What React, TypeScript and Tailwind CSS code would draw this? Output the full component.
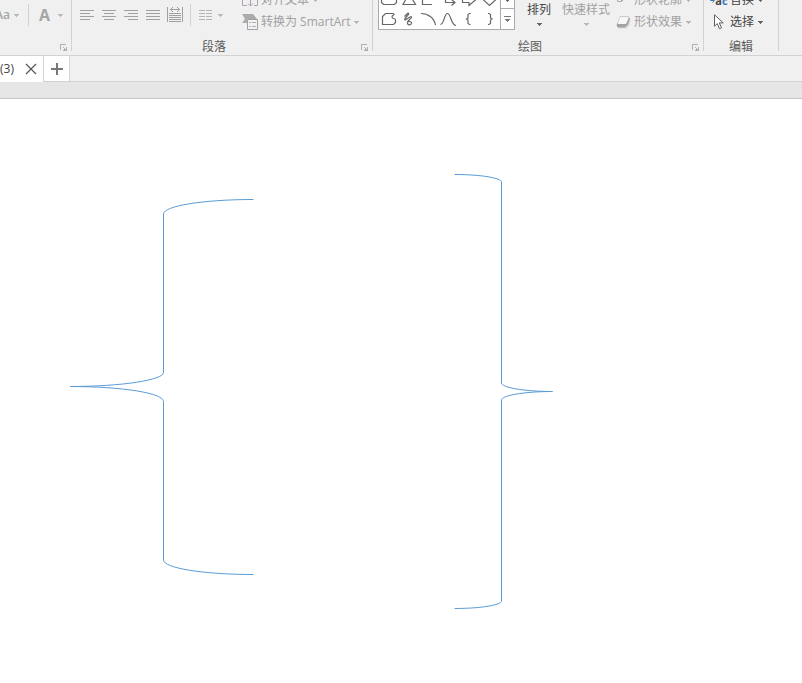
import type { ReactNode } from "react";

function Caret({ dark = false }: { dark?: boolean }) {
  return (
    <svg
      width="5"
      height="3"
      viewBox="0 0 5 3"
      shapeRendering="crispEdges"
      className={dark ? "shrink-0 text-[#666666]" : "shrink-0 text-[#b8b8b8]"}
    >
      <path d="M0 0h5v1H0zM1 1h3v1H1zM2 2h1v1H2z" fill="currentColor" />
    </svg>
  );
}

function Divider() {
  return <div className="h-[51px] w-px shrink-0 bg-[#d2d2d2]" />;
}

function SmallDivider() {
  return <div className="h-[22px] w-px shrink-0 bg-[#d2d2d2]" />;
}

function Launcher({ label }: { label: string }) {
  return (
    <button aria-label={label} className="flex h-4 w-4 items-center justify-end pr-1 text-[#b0b0b0]">
      <svg width="7" height="7" viewBox="0 0 7 7" shapeRendering="crispEdges">
        <path
          d="M0 0h6v1H1v5H0zM3 3h1v1H3zM4 4h1v1H4zM6 3h1v4H3V6h1V5h2z"
          fill="currentColor"
        />
      </svg>
    </button>
  );
}

type GroupProps = {
  label: string;
  className: string;
  launcher?: boolean;
  children: ReactNode;
};

function Group({ label, className, launcher = false, children }: GroupProps) {
  return (
    <>
      <section className={`flex h-[55px] shrink-0 flex-col ${className}`}>
        <div className="flex h-[33px] items-start">{children}</div>
        <div className="flex h-[22px] items-center pt-[6px]">
          <h2 className="flex-1 text-center text-[#5c5c5c]">{label}</h2>
          {launcher && <Launcher label={`${label || "字体"}设置`} />}
        </div>
      </section>
      <Divider />
    </>
  );
}

const alignments = [
  { label: "左对齐", d: "M0 0h14v1H0zM0 3h10v1H0zM0 6h14v1H0zM0 9h10v1H0z" },
  { label: "居中", d: "M0 0h14v1H0zM2 3h10v1H2zM0 6h14v1H0zM2 9h10v1H2z" },
  { label: "右对齐", d: "M0 0h14v1H0zM4 3h10v1H4zM0 6h14v1H0zM4 9h10v1H4z" },
  { label: "两端对齐", d: "M0 0h14v1H0zM0 3h14v1H0zM0 6h14v1H0zM0 9h14v1H0z" },
];

// Each shape is drawn in a 20x20 cell
const shapes = [
  { label: "圆角矩形", d: "M4.5 5.5h11l2 2v6l-2 2h-11l-2-2v-6z" },
  { label: "三角形", d: "M10 4.500l6.5 11H4z" },
  { label: "肘形连接符", d: "M3 5.500h10M3.500 5.500v10H13" },
  { label: "肘形箭头", d: "M3 5.500h3.5v8H16M12.500 10.500l3.5 3-3.500 3" },
  { label: "右箭头", d: "M2.5 7.5h6.500v-3l7 6-7 6v-3h-6.500z" },
  { label: "菱形", d: "M9.5 4.5l6.5 6-6.5 6-6.5-6z" },
  {
    label: "任意多边形",
    d: "M3.5 15.5v-8l3-3h7.500c1 0 1.500 1 .5 1.500-2 1-2 3 0 3.500 1.500 0 2 1 2 2v2l-2 2z",
  },
  {
    label: "自由曲线",
    d: "M5.5 7.5l3-3c1-1 1.500 0 1 1l-3.500 4c-.8 1 0 2 1 1l4-2.500c1.500-1 2 0 1 1.200l-3 3c-1.500 2 0 4 2 3.500s2-2.500.5-3-2.500 0-3 .5",
  },
  { label: "弧形", d: "M2 4.500C9 4.500 15 8.500 16.500 16" },
  { label: "曲线", d: "M1.500 15.500C5.500 15 5 4.500 8.500 4.500s3.500 12 8.500 12" },
  { label: "左大括号", d: "M10.500 4.500H9.500l-1.500 1V9L6.500 10l1.500 1v3.500l1.500 1h1" },
  { label: "右大括号", d: "M8 4.500h1l1.500 1V9l1.500 1-1.500 1v3.500l-1.500 1H8" },
];

function TextRow({
  icon,
  label,
  dark = false,
}: {
  icon: ReactNode;
  label: string;
  dark?: boolean;
}) {
  return (
    <button
      className={`flex h-[22px] shrink-0 items-center whitespace-nowrap ${dark ? "text-[#444444]" : "text-[#a0a0a0]"}`}
    >
      <span className="flex w-[18px] shrink-0 justify-center">{icon}</span>
      <span className="pr-1 pl-[2px]">{label}</span>
      <Caret dark={dark} />
    </button>
  );
}

function FontGroup() {
  return (
    <Group label="" className="w-[71px]" launcher>
      <div className="mt-1 flex h-[22px] w-full items-center justify-end pr-2 text-[#a6a6a6]">
        <button className="flex items-center gap-1">
          <span className="font-semibold">Aa</span>
          <Caret />
        </button>
        <span className="pr-[10px] pl-[9px]">
          <SmallDivider />
        </span>
        <button className="flex items-center gap-2">
          <span className="text-base font-bold">A</span>
          <Caret />
        </button>
      </div>
    </Group>
  );
}

function ParagraphGroup() {
  return (
    <Group label="段落" className="w-[300px]" launcher>
      <div className="mt-1 flex h-[22px] items-center pl-2 text-[#a0a0a0]">
        <div className="flex items-center gap-2">
          {alignments.map((item) => (
            <button key={item.label} aria-label={item.label}>
              <svg
                width="14"
                height="10"
                viewBox="0 0 14 10"
                shapeRendering="crispEdges"
                className="block"
              >
                <path d={item.d} fill="currentColor" />
              </svg>
            </button>
          ))}
        </div>
        <button aria-label="分散对齐" className="mr-[7px] ml-[7px]">
          <svg
            width="16"
            height="16"
            viewBox="0 0 16 16"
            shapeRendering="crispEdges"
            className="block"
          >
            <path
              d="M0 0h1v15H0zM15 0h1v15h-1zM2 6h12v1H2zM2 8h12v1H2zM2 10h12v1H2zM2 12h12v1H2zM2 14h12v1H2zM3 2h10v1H3zM4 1h1v3H4zM5 0h1v1H5zM5 4h1v1H5zM11 1h1v3h-1zM10 0h1v1h-1zM10 4h1v1h-1z"
              fill="currentColor"
            />
          </svg>
        </button>
        <SmallDivider />
        <button aria-label="分栏" className="ml-2 flex items-center gap-[6px]">
          <svg width="13" height="10" viewBox="0 0 13 10" shapeRendering="crispEdges">
            <path
              d="M0 0h6v1H0zM7 0h6v1H7zM0 3h6v1H0zM7 3h6v1H7zM0 6h6v1H0zM7 6h6v1H7zM0 9h6v1H0zM7 9h6v1H7z"
              fill="#b4b4b4"
            />
          </svg>
          <Caret />
        </button>
      </div>
      <div className="ml-[18px] flex h-[33px] flex-col justify-end">
        <TextRow
          label="对齐文本"
          icon={
            <svg width="16" height="16" viewBox="0 0 16 16" fill="none" stroke="#a8a8a8">
              <path d="M5 13.500H.5V.5h15v13H12" />
              <path d="M8.500 6v8M6 11.500l2.500 2.500 2.500-2.500M3 4.500h10" stroke="#b09db4" />
            </svg>
          }
        />
        <TextRow
          label="转换为 SmartArt"
          icon={
            <svg width="16" height="16" viewBox="0 0 16 16" fill="none">
              <path d="M0 0h11l4 5H5v4H0l3-4z" fill="#ababab" />
              <path d="M5.500 5.500h10v10h-10z" fill="#f4f1f5" stroke="#a0a0a0" />
              <path d="M7 8h2v1H7zM10 8h4v1h-4zM7 12h2v1H7zM10 12h4v1h-4z" fill="#b9a9be" />
            </svg>
          }
        />
      </div>
    </Group>
  );
}

function ShapeGallery() {
  return (
    <div className="ml-[5px] flex h-[30px] w-[137px] items-end overflow-hidden border-x border-b border-[#ababab] bg-white">
      <div className="grid w-[121px] shrink-0 grid-cols-6">
        {shapes.map((shape) => (
          <button key={shape.label} aria-label={shape.label}>
            <svg
              width="20"
              height="20"
              viewBox="0 0 20 20"
              fill="none"
              stroke="#666666"
              strokeWidth="1.2"
              className="block"
            >
              <path d={shape.d} />
            </svg>
          </button>
        ))}
      </div>
      <div className="flex h-full flex-1 flex-col border-l border-[#ababab]">
        <button aria-label="下一行" className="flex h-[9px] justify-center border-b border-[#ababab]">
          <svg width="3" height="2" viewBox="0 0 3 2" shapeRendering="crispEdges">
            <path d="M0 0h3v1H0zM1 1h1v1H1z" fill="#666666" />
          </svg>
        </button>
        <button aria-label="其他" className="flex flex-1 items-center justify-center">
          <svg width="7" height="7" viewBox="0 0 7 7" shapeRendering="crispEdges">
            <path d="M0 0h7v1H0zM1 3h5v1H1zM2 4h3v1H2zM3 5h1v1H3z" fill="#777777" />
          </svg>
        </button>
      </div>
    </div>
  );
}

function DrawingGroup() {
  return (
    <Group label="绘图" className="w-[330px]" launcher>
      <ShapeGallery />
      <button className="ml-3 flex flex-col items-center gap-[3px] whitespace-nowrap text-[#444444]">
        <span className="h-5 leading-5">排列</span>
        <Caret dark />
      </button>
      <button className="ml-[11px] flex flex-col items-center gap-[3px] whitespace-nowrap text-[#a0a0a0]">
        <span className="h-5 leading-5">快速样式</span>
        <Caret />
      </button>
      <div className="ml-1 flex h-[33px] flex-col justify-end">
        <TextRow
          label="形状轮廓"
          icon={
            <svg width="14" height="12" viewBox="0 0 14 12" fill="none" stroke="#a8a8a8">
              <path d="M8.500 1.500h-7v6h4l3-3" />
              <path d="M5 6l6-6 1 1-6 6z" fill="#c8c8c8" />
            </svg>
          }
        />
        <TextRow
          label="形状效果"
          icon={
            <svg width="15" height="13" viewBox="0 0 15 13">
              <path d="M5 3h9.500l-1 6-3 3.500H2z" fill="#d6d6d6" />
              <path d="M4 .5h8.500L14 2.500l-2 6-3 3H2L.5 9.500z" fill="#a3a3a3" />
              <path d="M5 1h6.500c1 0 1.300.6 1 1.300l-1.800 4.400c-.4.900-1 1.300-2 1.300H3c-1 0-1.300-.6-1-1.300L3.700 2C4 1.300 4.300 1 5 1z" fill="#f6f6f6" />
            </svg>
          }
        />
      </div>
    </Group>
  );
}

function EditingGroup() {
  return (
    <Group label="编辑" className="w-[74px]">
      <div className="ml-[6px] flex h-[33px] flex-col justify-end">
        <TextRow
          dark
          label="替换"
          icon={
            <span className="flex items-center leading-none font-bold">
              <svg width="5" height="6" viewBox="0 0 5 6" fill="none" stroke="#3b78b8">
                <path d="M.5 0v3.500H4M2.500 1.500l2 2-2 2" />
              </svg>
              <span className="text-[11px]">
                a<span className="text-[#3b78b8]">c</span>
              </span>
            </span>
          }
        />
        <TextRow
          dark
          label="选择"
          icon={
            <svg width="10" height="16" viewBox="0 0 10 16">
              <path
                d="M.5.8v11.400l2.800-2.600 2.200 5.200 2-1-2.200-4.900h3.900z"
                fill="#ffffff"
                stroke="#606060"
              />
            </svg>
          }
        />
      </div>
    </Group>
  );
}

function DocumentTabs() {
  return (
    <nav className="flex h-[26px] border-b border-[#d2d2d2] bg-[#f0f0f0]">
      <div className="-mb-px flex w-[43px] shrink-0 items-center justify-between bg-white pr-[6px] text-[#444444]">
        <a href="#doc">(3)</a>
        <button aria-label="关闭">
          <svg width="12" height="12" viewBox="0 0 12 12" stroke="#555555" className="block">
            <path d="M1 1l10 10M11 1L1 11" strokeWidth="1.2" />
          </svg>
        </button>
      </div>
      <button
        aria-label="新建"
        className="flex w-[27px] shrink-0 items-center justify-center border-x border-[#d2d2d2] bg-white"
      >
        <svg width="12" height="12" viewBox="0 0 12 12" shapeRendering="crispEdges">
          <path d="M5 0h2v12H5zM0 5h12v2H0z" fill="#777777" />
        </svg>
      </button>
    </nav>
  );
}

function Slide() {
  return (
    <main className="relative min-h-[584px] overflow-hidden bg-white">
      <svg
        width="184"
        height="377"
        viewBox="0 0 184 377"
        fill="none"
        stroke="#5b9bd5"
        className="absolute top-[100px] left-[70px]"
      >
        <path d="M183.500.5C133 .5 93.500 7 93.500 15V173.500C93.500 181 52 187.500 0 187.500C52 187.500 93.500 194 93.500 202.500V361C93.500 369 133 375.500 183.500 375.500" />
      </svg>
      <svg
        width="99"
        height="436"
        viewBox="0 0 99 436"
        fill="none"
        stroke="#5b9bd5"
        className="absolute top-[75px] left-[454px]"
      >
        <path d="M.5.5C27 .5 47.500 4 47.500 8V209C47.500 213.500 70 217.500 98.500 217.500C70 217.500 47.500 221.500 47.500 226V427C47.500 431 27 434.500.5 434.500" />
      </svg>
    </main>
  );
}

export default function App() {
  return (
    <div className="min-h-screen bg-white font-['Open_Sans','Noto_Sans_CJK_SC',sans-serif] text-xs">
      <header>
        <div className="flex h-14 overflow-hidden border-b border-[#d2d2d2] bg-[#f0f0f0]">
          <FontGroup />
          <ParagraphGroup />
          <DrawingGroup />
          <EditingGroup />
        </div>
        <DocumentTabs />
        <div className="h-[17px] border-b border-[#c6c6c6] bg-[#e6e6e6]" />
      </header>
      <Slide />
    </div>
  );
}
